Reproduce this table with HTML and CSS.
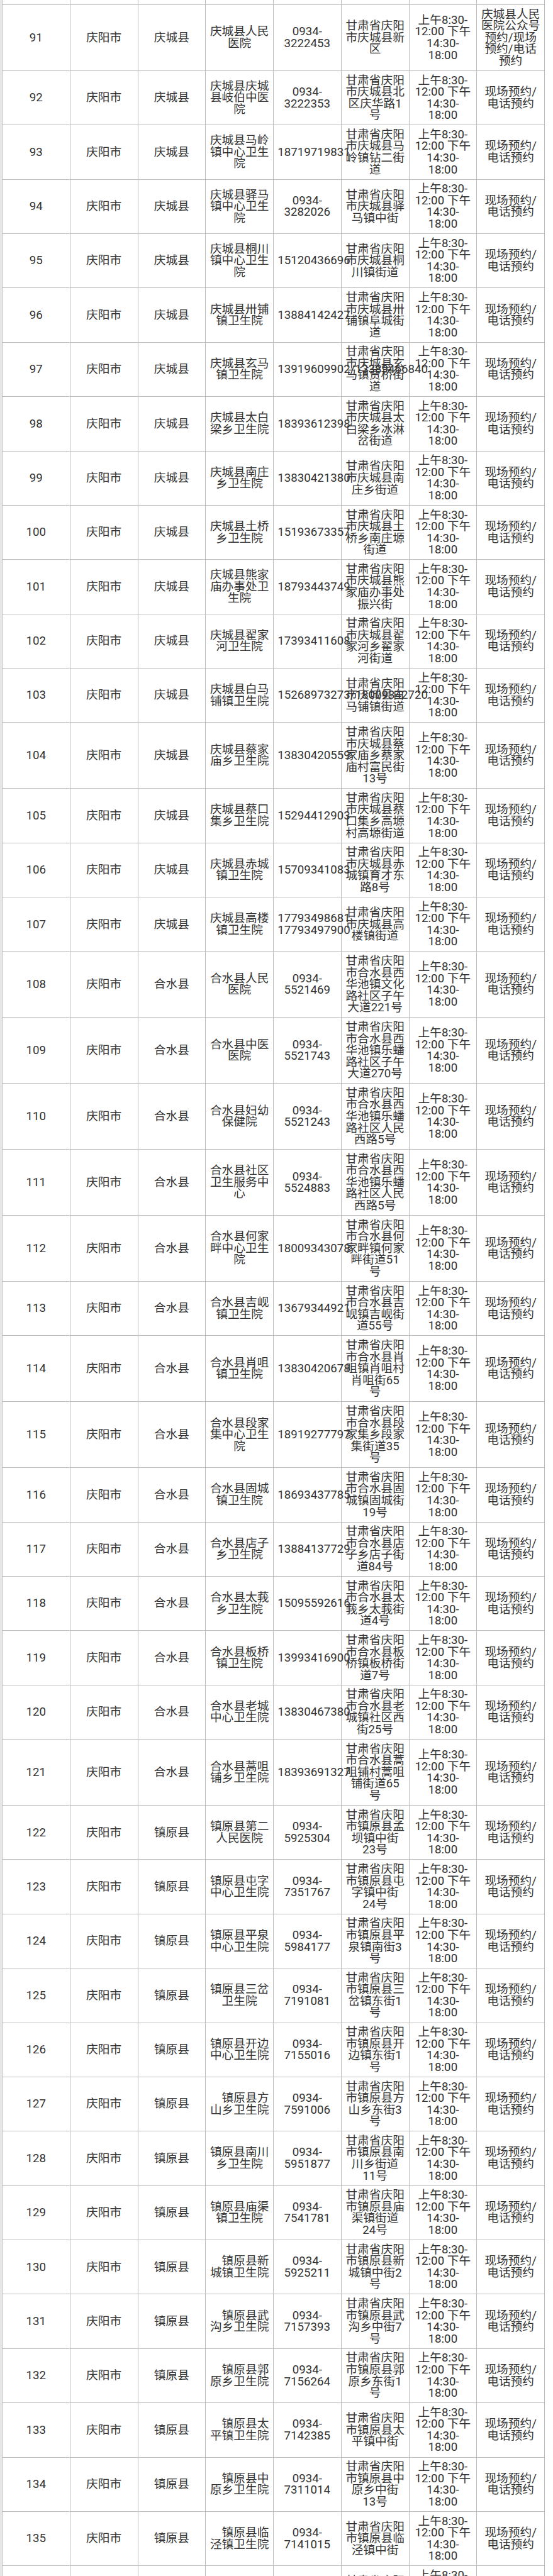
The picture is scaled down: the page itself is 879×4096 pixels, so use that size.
FILE: index.html
```html
<!DOCTYPE html>
<html lang="zh-CN">
<head>
<meta charset="utf-8">
<title>庆阳市医疗机构预约</title>
<link rel="stylesheet" href="styles.css">
</head>
<body>
<div class="sheet">
<table class="grid">
<colgroup><col><col><col><col><col><col><col><col></colgroup>
<tbody>
<tr class="stub"><td></td><td></td><td></td><td></td><td></td><td></td><td></td><td></td></tr>
<tr><td>91</td><td>庆阳市</td><td>庆城县</td><td>庆城县人民医院</td><td>0934-3222453</td><td>甘肃省庆阳市庆城县新区</td><td>上午8:30-12:00 下午14:30-18:00</td><td>庆城县人民医院公众号预约/现场预约/电话预约</td></tr>
<tr><td>92</td><td>庆阳市</td><td>庆城县</td><td>庆城县庆城县岐伯中医院</td><td>0934-3222353</td><td>甘肃省庆阳市庆城县北区庆华路1号</td><td>上午8:30-12:00 下午14:30-18:00</td><td>现场预约/电话预约</td></tr>
<tr><td>93</td><td>庆阳市</td><td>庆城县</td><td>庆城县马岭镇中心卫生院</td><td>18719719831</td><td>甘肃省庆阳市庆城县马岭镇钻二街道</td><td>上午8:30-12:00 下午14:30-18:00</td><td>现场预约/电话预约</td></tr>
<tr><td>94</td><td>庆阳市</td><td>庆城县</td><td>庆城县驿马镇中心卫生院</td><td>0934-3282026</td><td>甘肃省庆阳市庆城县驿马镇中街</td><td>上午8:30-12:00 下午14:30-18:00</td><td>现场预约/电话预约</td></tr>
<tr><td>95</td><td>庆阳市</td><td>庆城县</td><td>庆城县桐川镇中心卫生院</td><td>15120436696</td><td>甘肃省庆阳市庆城县桐川镇街道</td><td>上午8:30-12:00 下午14:30-18:00</td><td>现场预约/电话预约</td></tr>
<tr><td>96</td><td>庆阳市</td><td>庆城县</td><td>庆城县卅铺镇卫生院</td><td>13884142427</td><td>甘肃省庆阳市庆城县卅铺镇阜城街道</td><td>上午8:30-12:00 下午14:30-18:00</td><td>现场预约/电话预约</td></tr>
<tr><td>97</td><td>庆阳市</td><td>庆城县</td><td>庆城县玄马镇卫生院</td><td>13919609902/13389466840</td><td>甘肃省庆阳市庆城县玄马镇贾桥街道</td><td>上午8:30-12:00 下午14:30-18:00</td><td>现场预约/电话预约</td></tr>
<tr><td>98</td><td>庆阳市</td><td>庆城县</td><td>庆城县太白梁乡卫生院</td><td>18393612398</td><td>甘肃省庆阳市庆城县太白梁乡冰淋岔街道</td><td>上午8:30-12:00 下午14:30-18:00</td><td>现场预约/电话预约</td></tr>
<tr><td>99</td><td>庆阳市</td><td>庆城县</td><td>庆城县南庄乡卫生院</td><td>13830421380</td><td>甘肃省庆阳市庆城县南庄乡街道</td><td>上午8:30-12:00 下午14:30-18:00</td><td>现场预约/电话预约</td></tr>
<tr><td>100</td><td>庆阳市</td><td>庆城县</td><td>庆城县土桥乡卫生院</td><td>15193673357</td><td>甘肃省庆阳市庆城县土桥乡南庄塬街道</td><td>上午8:30-12:00 下午14:30-18:00</td><td>现场预约/电话预约</td></tr>
<tr><td>101</td><td>庆阳市</td><td>庆城县</td><td>庆城县熊家庙办事处卫生院</td><td>18793443749</td><td>甘肃省庆阳市庆城县熊家庙办事处振兴街</td><td>上午8:30-12:00 下午14:30-18:00</td><td>现场预约/电话预约</td></tr>
<tr><td>102</td><td>庆阳市</td><td>庆城县</td><td>庆城县翟家河卫生院</td><td>17393411608</td><td>甘肃省庆阳市庆城县翟家河乡翟家河街道</td><td>上午8:30-12:00 下午14:30-18:00</td><td>现场预约/电话预约</td></tr>
<tr><td>103</td><td>庆阳市</td><td>庆城县</td><td>庆城县白马铺镇卫生院</td><td>15268973273/18009342720</td><td>甘肃省庆阳市庆城县白马铺镇街道</td><td>上午8:30-12:00 下午14:30-18:00</td><td>现场预约/电话预约</td></tr>
<tr><td>104</td><td>庆阳市</td><td>庆城县</td><td>庆城县蔡家庙乡卫生院</td><td>13830420559</td><td>甘肃省庆阳市庆城县蔡家庙乡蔡家庙村富民街13号</td><td>上午8:30-12:00 下午14:30-18:00</td><td>现场预约/电话预约</td></tr>
<tr><td>105</td><td>庆阳市</td><td>庆城县</td><td>庆城县蔡口集乡卫生院</td><td>15294412903</td><td>甘肃省庆阳市庆城县蔡口集乡高塬村高塬街道</td><td>上午8:30-12:00 下午14:30-18:00</td><td>现场预约/电话预约</td></tr>
<tr><td>106</td><td>庆阳市</td><td>庆城县</td><td>庆城县赤城镇卫生院</td><td>15709341083</td><td>甘肃省庆阳市庆城县赤城镇育才东路8号</td><td>上午8:30-12:00 下午14:30-18:00</td><td>现场预约/电话预约</td></tr>
<tr><td>107</td><td>庆阳市</td><td>庆城县</td><td>庆城县高楼镇卫生院</td><td>17793498681 17793497900</td><td>甘肃省庆阳市庆城县高楼镇街道</td><td>上午8:30-12:00 下午14:30-18:00</td><td>现场预约/电话预约</td></tr>
<tr><td>108</td><td>庆阳市</td><td>合水县</td><td>合水县人民医院</td><td>0934-5521469</td><td>甘肃省庆阳市合水县西华池镇文化路社区子午大道221号</td><td>上午8:30-12:00 下午14:30-18:00</td><td>现场预约/电话预约</td></tr>
<tr><td>109</td><td>庆阳市</td><td>合水县</td><td>合水县中医医院</td><td>0934-5521743</td><td>甘肃省庆阳市合水县西华池镇乐蟠路社区子午大道270号</td><td>上午8:30-12:00 下午14:30-18:00</td><td>现场预约/电话预约</td></tr>
<tr><td>110</td><td>庆阳市</td><td>合水县</td><td>合水县妇幼保健院</td><td>0934-5521243</td><td>甘肃省庆阳市合水县西华池镇乐蟠路社区人民西路5号</td><td>上午8:30-12:00 下午14:30-18:00</td><td>现场预约/电话预约</td></tr>
<tr><td>111</td><td>庆阳市</td><td>合水县</td><td>合水县社区卫生服务中心</td><td>0934-5524883</td><td>甘肃省庆阳市合水县西华池镇乐蟠路社区人民西路5号</td><td>上午8:30-12:00 下午14:30-18:00</td><td>现场预约/电话预约</td></tr>
<tr><td>112</td><td>庆阳市</td><td>合水县</td><td>合水县何家畔中心卫生院</td><td>18009343078</td><td>甘肃省庆阳市合水县何家畔镇何家畔街道51号</td><td>上午8:30-12:00 下午14:30-18:00</td><td>现场预约/电话预约</td></tr>
<tr><td>113</td><td>庆阳市</td><td>合水县</td><td>合水县吉岘镇卫生院</td><td>13679344921</td><td>甘肃省庆阳市合水县吉岘镇吉岘街道55号</td><td>上午8:30-12:00 下午14:30-18:00</td><td>现场预约/电话预约</td></tr>
<tr><td>114</td><td>庆阳市</td><td>合水县</td><td>合水县肖咀镇卫生院</td><td>13830420678</td><td>甘肃省庆阳市合水县肖咀镇肖咀村肖咀街65号</td><td>上午8:30-12:00 下午14:30-18:00</td><td>现场预约/电话预约</td></tr>
<tr><td>115</td><td>庆阳市</td><td>合水县</td><td>合水县段家集中心卫生院</td><td>18919277797</td><td>甘肃省庆阳市合水县段家集乡段家集街道35号</td><td>上午8:30-12:00 下午14:30-18:00</td><td>现场预约/电话预约</td></tr>
<tr><td>116</td><td>庆阳市</td><td>合水县</td><td>合水县固城镇卫生院</td><td>18693437785</td><td>甘肃省庆阳市合水县固城镇固城街19号</td><td>上午8:30-12:00 下午14:30-18:00</td><td>现场预约/电话预约</td></tr>
<tr><td>117</td><td>庆阳市</td><td>合水县</td><td>合水县店子乡卫生院</td><td>13884137729</td><td>甘肃省庆阳市合水县店子乡店子街道84号</td><td>上午8:30-12:00 下午14:30-18:00</td><td>现场预约/电话预约</td></tr>
<tr><td>118</td><td>庆阳市</td><td>合水县</td><td>合水县太莪乡卫生院</td><td>15095592616</td><td>甘肃省庆阳市合水县太莪乡太莪街道4号</td><td>上午8:30-12:00 下午14:30-18:00</td><td>现场预约/电话预约</td></tr>
<tr><td>119</td><td>庆阳市</td><td>合水县</td><td>合水县板桥镇卫生院</td><td>13993416900</td><td>甘肃省庆阳市合水县板桥镇板桥街道7号</td><td>上午8:30-12:00 下午14:30-18:00</td><td>现场预约/电话预约</td></tr>
<tr><td>120</td><td>庆阳市</td><td>合水县</td><td>合水县老城中心卫生院</td><td>13830467380</td><td>甘肃省庆阳市合水县老城镇社区西街25号</td><td>上午8:30-12:00 下午14:30-18:00</td><td>现场预约/电话预约</td></tr>
<tr><td>121</td><td>庆阳市</td><td>合水县</td><td>合水县蒿咀铺乡卫生院</td><td>18393691327</td><td>甘肃省庆阳市合水县蒿咀铺村蒿咀铺街道65号</td><td>上午8:30-12:00 下午14:30-18:00</td><td>现场预约/电话预约</td></tr>
<tr><td>122</td><td>庆阳市</td><td>镇原县</td><td>镇原县第二人民医院</td><td>0934-5925304</td><td>甘肃省庆阳市镇原县孟坝镇中街23号</td><td>上午8:30-12:00 下午14:30-18:00</td><td>现场预约/电话预约</td></tr>
<tr><td>123</td><td>庆阳市</td><td>镇原县</td><td>镇原县屯字中心卫生院</td><td>0934-7351767</td><td>甘肃省庆阳市镇原县屯字镇中街24号</td><td>上午8:30-12:00 下午14:30-18:00</td><td>现场预约/电话预约</td></tr>
<tr><td>124</td><td>庆阳市</td><td>镇原县</td><td>镇原县平泉中心卫生院</td><td>0934-5984177</td><td>甘肃省庆阳市镇原县平泉镇南街3号</td><td>上午8:30-12:00 下午14:30-18:00</td><td>现场预约/电话预约</td></tr>
<tr><td>125</td><td>庆阳市</td><td>镇原县</td><td>镇原县三岔卫生院</td><td>0934-7191081</td><td>甘肃省庆阳市镇原县三岔镇东街1号</td><td>上午8:30-12:00 下午14:30-18:00</td><td>现场预约/电话预约</td></tr>
<tr><td>126</td><td>庆阳市</td><td>镇原县</td><td>镇原县开边中心卫生院</td><td>0934-7155016</td><td>甘肃省庆阳市镇原县开边镇东街1号</td><td>上午8:30-12:00 下午14:30-18:00</td><td>现场预约/电话预约</td></tr>
<tr><td>127</td><td>庆阳市</td><td>镇原县</td><td>　镇原县方山乡卫生院</td><td>0934-7591006</td><td>甘肃省庆阳市镇原县方山乡东街3号</td><td>上午8:30-12:00 下午14:30-18:00</td><td>现场预约/电话预约</td></tr>
<tr><td>128</td><td>庆阳市</td><td>镇原县</td><td>镇原县南川乡卫生院</td><td>0934-5951877</td><td>甘肃省庆阳市镇原县南川乡街道11号</td><td>上午8:30-12:00 下午14:30-18:00</td><td>现场预约/电话预约</td></tr>
<tr><td>129</td><td>庆阳市</td><td>镇原县</td><td>镇原县庙渠镇卫生院</td><td>0934-7541781</td><td>甘肃省庆阳市镇原县庙渠镇街道24号</td><td>上午8:30-12:00 下午14:30-18:00</td><td>现场预约/电话预约</td></tr>
<tr><td>130</td><td>庆阳市</td><td>镇原县</td><td>　镇原县新城镇卫生院</td><td>0934-5925211</td><td>甘肃省庆阳市镇原县新城镇中街2号</td><td>上午8:30-12:00 下午14:30-18:00</td><td>现场预约/电话预约</td></tr>
<tr><td>131</td><td>庆阳市</td><td>镇原县</td><td>　镇原县武沟乡卫生院</td><td>0934-7157393</td><td>甘肃省庆阳市镇原县武沟乡中街7号</td><td>上午8:30-12:00 下午14:30-18:00</td><td>现场预约/电话预约</td></tr>
<tr><td>132</td><td>庆阳市</td><td>镇原县</td><td>　镇原县郭原乡卫生院</td><td>0934-7156264</td><td>甘肃省庆阳市镇原县郭原乡东街1号</td><td>上午8:30-12:00 下午14:30-18:00</td><td>现场预约/电话预约</td></tr>
<tr><td>133</td><td>庆阳市</td><td>镇原县</td><td>　镇原县太平镇卫生院</td><td>0934-7142385</td><td>甘肃省庆阳市镇原县太平镇中街</td><td>上午8:30-12:00 下午14:30-18:00</td><td>现场预约/电话预约</td></tr>
<tr><td>134</td><td>庆阳市</td><td>镇原县</td><td>　镇原县中原乡卫生院</td><td>0934-7311014</td><td>甘肃省庆阳市镇原县中原乡中街13号</td><td>上午8:30-12:00 下午14:30-18:00</td><td>现场预约/电话预约</td></tr>
<tr><td>135</td><td>庆阳市</td><td>镇原县</td><td>　镇原县临泾镇卫生院</td><td>0934-7141015</td><td>甘肃省庆阳市镇原县临泾镇中街</td><td>上午8:30-12:00 下午14:30-18:00</td><td>现场预约/电话预约</td></tr>
<tr><td>136</td><td>庆阳市</td><td>镇原县</td><td>　镇原县上肖乡卫生院</td><td>0934-7126002</td><td>甘肃省庆阳市镇原县上肖乡中街</td><td>上午8:30-12:00 下午14:30-18:00</td><td>现场预约/电话预约</td></tr>
</tbody>
</table>
</div>
</body>
</html>
```

FILE: styles.css
```css
html, body {
  margin: 0;
  padding: 0;
  background: #ffffff;
}

.sheet {
  border-left: 3px solid #e6e6e6;
}

.grid {
  border-collapse: collapse;
  table-layout: fixed;
  width: 863px;
  font-family: Roboto, "Noto Sans CJK SC", sans-serif;
  font-size: 18.7px;
  line-height: 18.55px;
  color: #333333;
}

.grid td {
  border: 1px solid #bcbcbc;
  padding: 5.6px 6.2px;
  text-align: center;
  vertical-align: middle;
}

.grid .stub {
  height: 7px;
}

.grid .stub td {
  height: 7px;
  padding: 0;
  border-top: none;
}
```
